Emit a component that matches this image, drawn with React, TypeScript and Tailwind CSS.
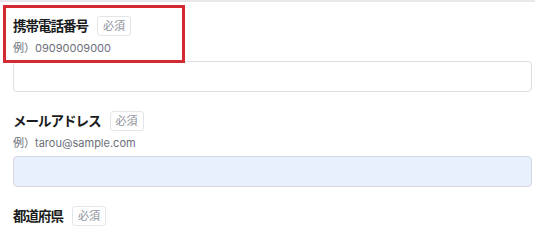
import React from "react";

type Field = {
  label: string;
  example?: string;
  filled?: boolean;
};

const fields: Field[] = [
  { label: "携帯電話番号", example: "例）09090009000" },
  { label: "メールアドレス", example: "例）tarou@sample.com", filled: true },
  { label: "都道府県" },
];

function Badge() {
  return (
    <span className="flex h-[20px] items-center rounded-[3px] border border-[#e3e5e8] px-[5px] text-[11px] text-[#8d9199]">
      必須
    </span>
  );
}

export default function App() {
  return (
    <div
      className="relative h-[235px] w-[535px] overflow-hidden border-t-2 border-[#e6e8eb] bg-white"
      style={{ fontFamily: "Inter, 'Noto Sans CJK JP', sans-serif" }}
    >
      <div className="flex flex-col gap-[18px] pt-[13px] pl-[13px] pr-[3px]">
        {fields.map((field) => (
          <div key={field.label} className="flex flex-col">
            <div className="flex h-[22px] items-center gap-[9px]">
              <span className="text-[13.5px] font-bold tracking-[-1px] text-[#1a1c20]">
                {field.label}
              </span>
              <Badge />
            </div>
            {field.example && (
              <>
                <p className="mt-[2px] text-[11px] leading-[18px] text-[#6b7079]">
                  {field.example}
                </p>
                <div
                  className={
                    field.filled
                      ? "mt-[4px] h-[31px] rounded-[4px] border border-[#d5d8dc] bg-[#e8f0fe]"
                      : "mt-[4px] h-[31px] rounded-[4px] border border-[#dcdfe3] bg-white"
                  }
                />
              </>
            )}
          </div>
        ))}
      </div>

      {/* red highlight annotation */}
      <div className="pointer-events-none absolute top-[3px] left-[3px] h-[58px] w-[182px] border-[3px] border-[#d42a32]" />
    </div>
  );
}
